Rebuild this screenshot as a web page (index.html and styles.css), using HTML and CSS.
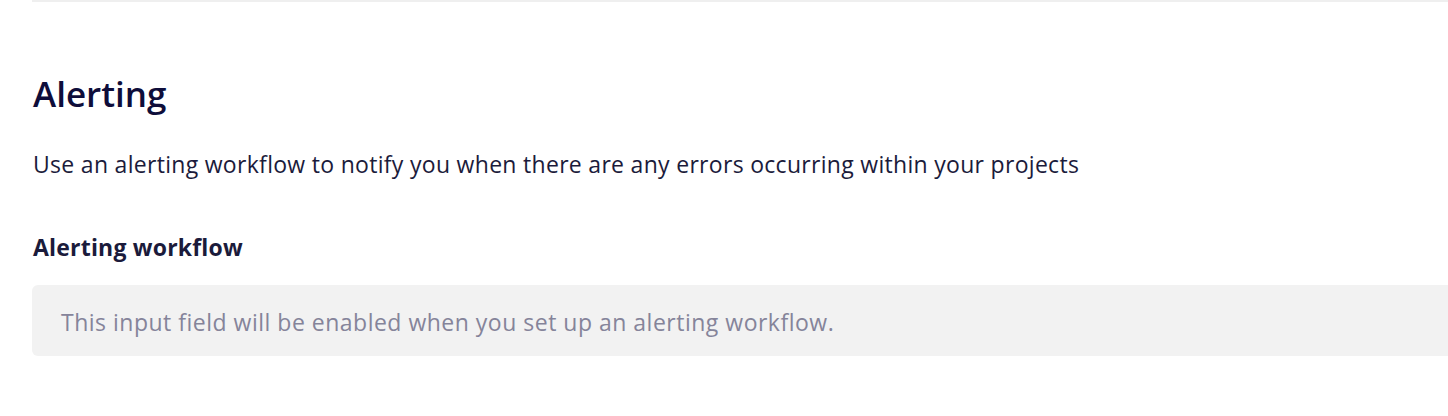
FILE: index.html
```html
<!DOCTYPE html>
<html>
<head>
<meta charset="utf-8">
<link rel="stylesheet" href="styles.css">
</head>
<body>
<div class="page">
  <section class="section">
    <h2 class="title">Alerting</h2>
    <p class="desc">Use an alerting workflow to notify you when there are any errors occurring within your projects</p>
    <div class="field">
      <label class="label">Alerting workflow</label>
      <div class="input">This input field will be enabled when you set up an alerting workflow.</div>
    </div>
  </section>
</div>
</body>
</html>
```

FILE: styles.css
```css
html, body {
  margin: 0;
  padding: 0;
  background: #ffffff;
  overflow: hidden;
}
body {
  font-family: "Open Sans", "Lato", sans-serif;
  color: #12123a;
}
.page {
  padding-left: 32px;
}
.section {
  border-top: 2px solid #efefef;
  padding-top: 69px;
}
.title {
  margin: 0;
  font-size: 35px;
  line-height: 46px;
  font-weight: 600;
  color: #0e0d3a;
  padding-left: 1px;
}
.desc {
  margin: 31px 0 0 0;
  font-size: 23px;
  line-height: 32px;
  letter-spacing: 0.3px;
  color: #1b1b3b;
  padding-left: 1px;
}
.field {
  margin-top: 51px;
  display: flex;
  flex-direction: column;
  gap: 22px;
}
.label {
  font-size: 23px;
  line-height: 32px;
  font-weight: 700;
  letter-spacing: 0.2px;
  color: #1b1b3b;
  padding-left: 1px;
}
.input {
  background: #f2f2f2;
  border-radius: 6px 0 0 6px;
  height: 71px;
  box-sizing: border-box;
  padding-top: 3px;
  display: flex;
  align-items: center;
  padding-left: 29px;
  font-size: 23px;
  letter-spacing: 0.5px;
  color: #85849a;
}
```
